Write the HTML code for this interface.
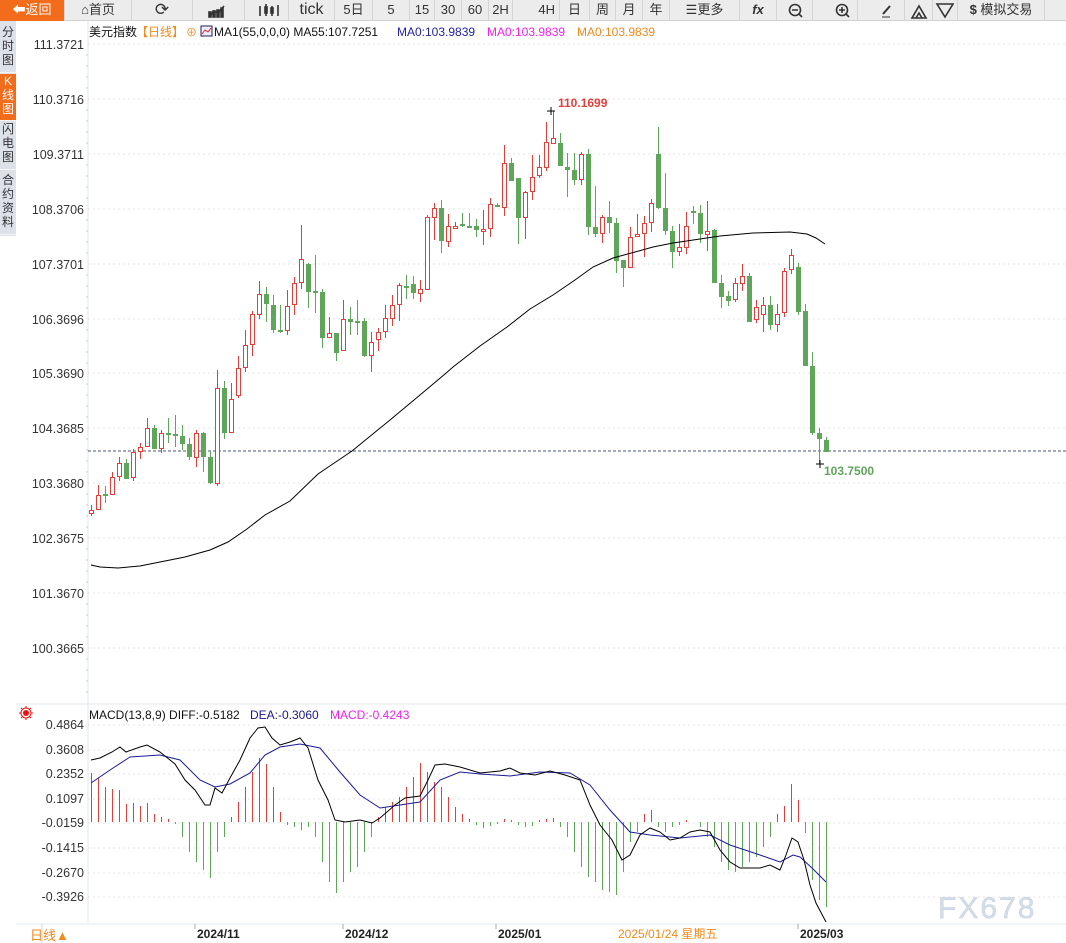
<!DOCTYPE html>
<html><head><meta charset="utf-8">
<style>
*{margin:0;padding:0;box-sizing:border-box}
body{width:1066px;height:943px;overflow:hidden;background:#fff;font-family:"Liberation Sans","Noto Sans CJK SC",sans-serif;position:relative}
#tb{position:absolute;left:0;top:0;width:1066px;height:21px;background:#ececec;border-bottom:1px solid #d0d0d0}
.b{position:absolute;top:0;height:21px;line-height:20px;text-align:center;font-size:13px;color:#333;border-right:1px solid #d4d4d4}
#side{position:absolute;left:0;top:21px;width:16px;height:215px;background:#dde1e8}
.t{position:absolute;left:0;width:16px;font-size:12px;line-height:14px;text-align:center;color:#333;border-bottom:1px solid #f5f5f5}
svg{position:absolute;left:0;top:0}
</style></head><body>
<div id="tb">
<div class="b" style="left:0;width:65px;background:#f26c1c;color:#fff">&#x2B05;返回</div>
<div class="b" style="left:65px;width:67px">&#x2302;首页</div>
<div class="b" style="left:132px;width:61px;font-size:17px">&#x27F3;</div>
<div class="b" style="left:193px;width:52px"></div>
<div class="b" style="left:245px;width:44px"></div>
<div class="b" style="left:289px;width:46px;font-size:16px">tick</div>
<div class="b" style="left:335px;width:38px">5日</div>
<div class="b" style="left:373px;width:37px">5</div>
<div class="b" style="left:410px;width:25px">15</div>
<div class="b" style="left:435px;width:27px">30</div>
<div class="b" style="left:462px;width:27px">60</div>
<div class="b" style="left:489px;width:24px">2H</div>
<div class="b" style="left:513px;width:47px;text-align:right;padding-right:4px">4H</div>
<div class="b" style="left:560px;width:30px">日</div>
<div class="b" style="left:590px;width:26px">周</div>
<div class="b" style="left:616px;width:27px">月</div>
<div class="b" style="left:643px;width:27px">年</div>
<div class="b" style="left:670px;width:70px">&#x2630;更多</div>
<div class="b" style="left:740px;width:37px;font-style:italic;font-weight:bold">fx</div>
<div class="b" style="left:777px;width:36px"></div>
<div class="b" style="left:813px;width:45px"></div>
<div class="b" style="left:858px;width:47px"></div>
<div class="b" style="left:905px;width:28px"></div>
<div class="b" style="left:933px;width:25px"></div>
<div class="b" style="left:958px;width:87px;font-weight:bold">$ <span style="font-weight:normal">模拟交易</span></div>
</div>
<div id="side">
<div class="t" style="top:4px;height:48px">分<br>时<br>图</div>
<div class="t" style="top:53px;height:47px;background:#f26c1c;color:#fff">K<br>线<br>图</div>
<div class="t" style="top:101px;height:48px">闪<br>电<br>图</div>
<div class="t" style="top:152px;height:62px">合<br>约<br>资<br>料</div>
</div>
<svg id="s" width="1066" height="943" xmlns="http://www.w3.org/2000/svg" font-family="Liberation Sans, Noto Sans CJK SC, sans-serif"></svg>
<script>
var s=document.getElementById('s'),h='';
function L(x1,y1,x2,y2,c,w,d){h+='<line shape-rendering="crispEdges" x1="'+x1+'" y1="'+y1+'" x2="'+x2+'" y2="'+y2+'" stroke="'+c+'" stroke-width="'+(w||1)+'"'+(d?' stroke-dasharray="'+d+'"':'')+'/>';}
function T(x,y,t,c,sz,a,fw){h+='<text x="'+x+'" y="'+y+'" fill="'+c+'" font-size="'+(sz||12)+'"'+(a?' text-anchor="'+a+'"':'')+(fw?' font-weight="'+fw+'"':'')+'>'+t+'</text>';}
function P(pts,c){h+='<polyline fill="none" stroke="'+c+'" stroke-width="1" points="'+pts.map(function(p){return p.join(',')}).join(' ')+'"/>';}
h+='<g stroke="#333" fill="none" stroke-width="1.6"><path d="M210 16 L214 11 L218 13 L224 6"/><rect x="209" y="12" width="2" height="5" fill="#333"/><rect x="213" y="11" width="2" height="6" fill="#333"/><rect x="217" y="10" width="2" height="7" fill="#333"/><rect x="221" y="8" width="2" height="9" fill="#333"/>';
h+='<path d="M260 6v10M266 4v12M272 6v10M278 5v11"/><rect x="265" y="7" width="2" height="6" fill="#333"/><rect x="271" y="8" width="2" height="5" fill="#333"/>';
h+='<circle cx="795" cy="10" r="5.5"/><path d="M792 10h6M799 14l3 3"/><circle cx="842" cy="10" r="5.5"/><path d="M839 10h6M842 7v6M846 14l3 3"/><path d="M883 14l7-8" stroke-width="2"/><path d="M882 17h8" stroke-width="1"/><path d="M912 18h14l-7-12z"/><path d="M937 4h16l-8 13z"/><path d="M916 18l3-5 3 5" /></g>';
L(88,21,88,922,'#dfe6ec',1);
var lab=['111.3721','110.3716','109.3711','108.3706','107.3701','106.3696','105.3690','104.3685','103.3680','102.3675','101.3670','100.3665'];
for(var i=0;i<12;i++){var y=Math.round(44+i*54.9);L(88,y,1066,y,'#e6e6e6',1,'2,3');T(84,y+5,lab[i],'#333',12.5,'end');for(var k=1;k<5;k++)L(86,y+k*11,88,y+k*11,'#ccc');}
L(88,451,1066,451,'#4a5a78',1,'3,2');
L(16,704,1066,704,'#e3e8ec',1);
var ml=['0.4864','0.3608','0.2352','0.1097','-0.0159','-0.1415','-0.2670','-0.3926'];
for(i=0;i<8;i++){var y=Math.round(725+i*24.6);L(88,y,1066,y,'#e6e6e6',1,'2,3');T(84,y+4,ml[i],'#333',12.5,'end');}
L(16,924,1066,924,'#e3e8ec',1);L(42,924,42,943,'#d0d6dc');
T(89,36,'美元指数','#111',12);T(136,36,'【日线】','#f28a1c',12);T(186,36,'⊕','#f28a1c',11);
h+='<rect x="201" y="26" width="11" height="10" fill="#eef" stroke="#224"/><path d="M202 34l3-4 3 2 3-4" stroke="#d22" fill="none"/>';
T(214,36,'MA1(55,0,0,0) MA55:107.7251','#111',12);T(397,36,'MA0:103.9839','#2222aa',12);T(487,36,'MA0:103.9839','#ee22ee',12);T(577,36,'MA0:103.9839','#f28a1c',12);
h+='<circle cx="26" cy="713" r="3" fill="#e11"/><circle cx="26" cy="713" r="5" fill="none" stroke="#e11"/><path d="M19 713h2M31 713h2M26 706v2M26 718v2M21 708l1 1M30 717l1 1M31 708l-1 1M21 718l1-1" stroke="#e11"/>';
T(89,719,'MACD(13,8,9) DIFF:-0.5182','#111',12);T(250,719,'DEA:-0.3060','#1a1a8a',12);T(330,719,'MACD:-0.4243','#ee22ee',12);
var C=[[513,510,505,516],[509,495,485,509],[494,495,486,503],[494,477,472,494],[476,463,457,481],[463,479,459,479],[477,452,449,481],[451,447,443,459],[446,428,418,446],[428,449,425,449],[448,433,430,453],[433,434,418,443],[434,435,415,447],[436,444,425,450],[444,457,438,460],[457,433,430,467],[433,457,432,472],[457,483,451,484],[483,388,370,486],[388,433,381,439],[432,399,383,432],[395,368,356,398],[367,345,330,372],[344,314,311,356],[314,294,281,319],[294,304,287,322],[305,330,295,333],[330,330,305,333],[330,306,290,335],[304,283,277,315],[282,259,225,289],[264,292,263,308],[291,292,255,313],[292,338,289,348],[337,333,317,338],[333,353,333,361],[350,319,300,350],[319,322,307,335],[321,322,300,335],[321,356,318,357],[355,342,332,372],[339,332,328,351],[331,318,305,338],[318,305,295,326],[304,285,283,321],[286,288,275,299],[284,293,276,299],[293,289,280,302],[289,217,215,290],[217,208,203,240],[208,241,200,253],[241,226,214,247],[227,226,222,228],[224,226,213,227],[226,226,213,228],[226,230,219,237],[230,229,210,245],[228,204,198,237],[205,207,203,207],[207,163,145,216],[163,181,158,181],[178,218,178,244],[217,192,191,239],[191,177,155,200],[175,167,155,178],[167,142,122,171],[143,138,111,143],[143,166,133,166],[167,170,153,197],[170,180,153,185],[179,154,152,185],[154,227,149,235],[227,234,186,237],[233,217,215,243],[217,223,201,233],[223,261,218,273],[260,268,260,287],[267,237,227,267],[235,234,214,237],[233,223,216,257],[222,203,199,232],[154,208,127,209],[208,231,173,235],[231,252,226,268],[251,247,224,256],[247,226,212,254],[211,213,206,224],[213,234,205,243],[234,231,201,251],[230,283,229,283],[283,297,275,308],[296,301,291,306],[299,283,278,302],[283,276,264,291],[276,322,273,322],[319,307,300,323],[314,305,297,332],[305,325,296,330],[324,314,304,332],[312,271,268,317],[269,255,249,274],[267,312,263,315],[311,366,304,366],[366,433,352,435],[433,439,428,464],[440,452,437,452]];
for(i=0;i<C.length;i++){var x=91+7*i,xl=x+0.5,c=C[i],up=c[1]<c[0],col=up?'#e0403a':'#5fa55a',t=Math.min(c[0],c[1]),b=Math.max(c[0],c[1]);if(b-t<2)b=t+2;
if(up){h+='<line x1="'+xl+'" y1="'+c[2]+'" x2="'+xl+'" y2="'+t+'" stroke="'+col+'"/><line x1="'+xl+'" y1="'+b+'" x2="'+xl+'" y2="'+c[3]+'" stroke="'+col+'"/><rect x="'+(x-1.5)+'" y="'+(t+0.5)+'" width="4" height="'+(b-t)+'" fill="#fff" stroke="'+col+'" stroke-width="1"/>';}
else{h+='<line x1="'+xl+'" y1="'+c[2]+'" x2="'+xl+'" y2="'+c[3]+'" stroke="'+col+'"/><rect x="'+(x-2)+'" y="'+t+'" width="5" height="'+(b-t)+'" fill="'+col+'"/>';}}
P([[91,565],[100,567],[118,568],[140,566],[160,562],[185,557],[210,550],[228,542],[247,529],[265,515],[290,501],[318,474],[352,451],[390,420],[420,395],[445,374],[453,367],[480,346],[507,327],[530,309],[553,295],[575,280],[593,267],[613,258],[635,252],[653,247],[673,243],[700,239],[720,236],[753,233],[790,232],[807,234],[816,238],[825,244]],'#000');
L(547,111,555,111,'#000');L(551,107,551,115,'#000');T(558,107,'110.1699','#e0403a',12,null,'bold');
L(816,464,824,464,'#000');L(820,460,820,468,'#000');T(824,475,'103.7500','#5fa55a',12,null,'bold');
var H=[-49,-44,-35,-33,-32,-18,-19,-16,-19,-8,-5,-3,2,15,30,40,48,56,30,15,-5,-20,-35,-50,-64,-58,-35,-10,3,5,8,5,15,40,60,71,60,50,45,30,15,-5,-15,-20,-25,-35,-45,-59,-50,-40,-35,-25,-15,-8,-3,3,6,4,2,-3,-2,3,5,4,-2,-3,-4,5,15,30,45,55,60,68,70,73,50,20,10,-8,-12,5,10,5,3,-2,0,5,15,25,40,48,50,45,40,35,25,15,-8,-16,-38,-22,11,58,78,85];
for(i=0;i<H.length;i++){var x=91.5+7*i;if(H[i])h+='<line x1="'+x+'" y1="822" x2="'+x+'" y2="'+(822+H[i])+'" stroke="'+(H[i]<0?'#e0403a':'#5fa55a')+'"/>';}
P([[91,783],[110,770],[130,757],[160,755],[180,760],[200,780],[215,787],[230,784],[250,773],[265,755],[280,747],[300,744],[320,748],[340,772],[360,795],[380,808],[400,805],[420,802],[440,780],[460,772],[480,774],[510,776],[540,772],[570,773],[590,785],[610,810],[630,832],[650,835],[680,838],[710,835],[730,845],[760,855],[780,862],[793,855],[800,857],[812,868],[826,882]],'#1a1a9a');
P([[91,760],[100,758],[112,752],[120,747],[126,752],[140,747],[147,745],[160,752],[175,764],[185,780],[195,790],[205,805],[210,805],[215,788],[222,793],[230,778],[240,760],[250,738],[258,728],[265,727],[272,738],[280,745],[290,742],[300,738],[308,748],[318,780],[328,800],[335,820],[345,822],[360,820],[372,823],[380,818],[395,805],[405,798],[420,796],[428,780],[435,765],[445,764],[460,767],[480,773],[500,771],[510,768],[520,773],[535,775],[550,771],[565,775],[580,780],[590,805],[600,825],[612,840],[622,860],[630,855],[640,835],[650,828],[660,832],[670,840],[680,838],[690,832],[700,830],[710,832],[720,850],[730,862],[740,868],[750,868],[760,868],[770,865],[780,870],[786,855],[792,838],[798,842],[804,860],[810,885],[816,903],[826,922]],'#000');
T(30,940,'日线▲','#f28a1c',13);
var d=[[197,'2024/11'],[345,'2024/12'],[498,'2025/01'],[800,'2025/03']];
d.forEach(function(a){L(a[0]-2,924,a[0]-2,929,'#aaa');T(a[0],938,a[1],'#222',12,null,'bold');});
T(618,938,'2025/01/24 星期五','#f28a1c',12);
h+='<text x="938" y="918" font-size="30" fill="#d3deea" stroke="#c5cfdb" stroke-width="0.5" letter-spacing="2">FX678</text>';
s.innerHTML=h;
</script>
</body></html>
